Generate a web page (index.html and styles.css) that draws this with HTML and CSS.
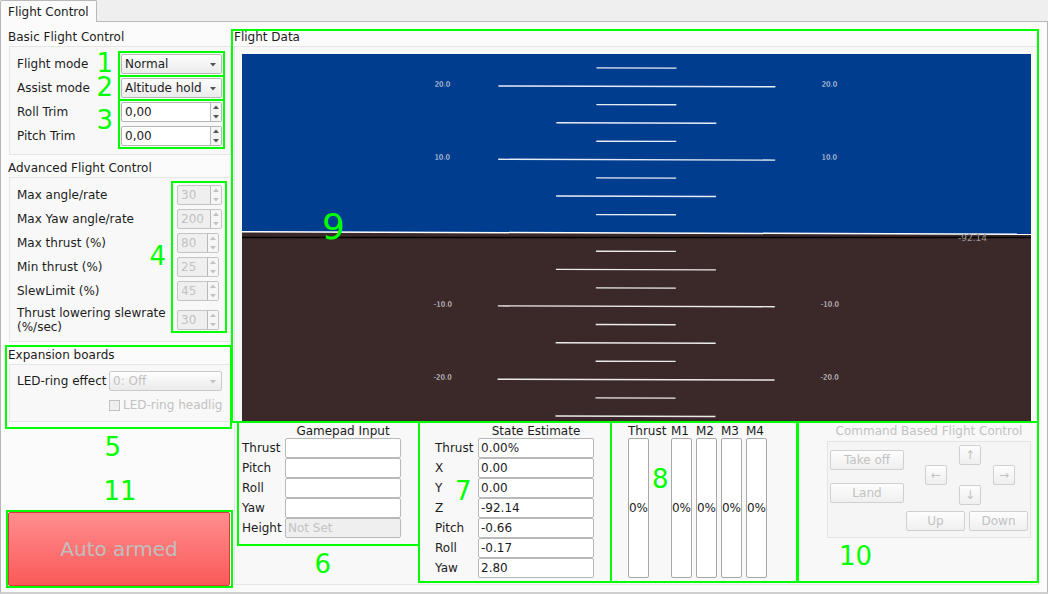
FILE: index.html
```html
<!DOCTYPE html>
<html lang="en">
<head>
<meta charset="utf-8">
<title>Flight Control</title>
<link rel="stylesheet" href="styles.css">
</head>
<body>
<svg class="defs" aria-hidden="true">
  <symbol id="down" viewBox="0 0 8 5"><path d="M1 1h6L4 4.5z"/></symbol>
  <symbol id="up" viewBox="0 0 8 5"><path d="M1 4h6L4 .5z"/></symbol>
</svg>
<nav class="tabs" role="tablist"><button class="tab" role="tab" aria-selected="true">Flight Control</button></nav>
<main class="page">
  <div class="side">
    <section class="group basic">
      <h2 class="title">Basic Flight Control</h2>
      <div class="box">
        <div class="row"><label for="mode">Flight mode</label>
          <div class="slot"><span class="combo"><select id="mode"><option>Normal</option></select><svg class="arrow"><use href="#down"/></svg></span>
            <div class="mark mark-slot"><b class="num num-left">1</b></div></div></div>
        <div class="row"><label for="assist">Assist mode</label>
          <div class="slot"><span class="combo"><select id="assist"><option>Altitude hold</option></select><svg class="arrow"><use href="#down"/></svg></span>
            <div class="mark mark-slot"><b class="num num-left">2</b></div></div></div>
        <div class="pair">
          <div class="labels"><label for="rtrim">Roll Trim</label><label for="ptrim">Pitch Trim</label></div>
          <div class="slots">
            <div class="slot"><span class="spin"><input id="rtrim" type="text" value="0,00"><span class="steps"><button aria-label="Increase roll trim"><svg><use href="#up"/></svg></button><button aria-label="Decrease roll trim"><svg><use href="#down"/></svg></button></span></span></div>
            <div class="slot"><span class="spin"><input id="ptrim" type="text" value="0,00"><span class="steps"><button aria-label="Increase pitch trim"><svg><use href="#up"/></svg></button><button aria-label="Decrease pitch trim"><svg><use href="#down"/></svg></button></span></span></div>
            <div class="mark mark-slot"><b class="num num-left num-high">3</b></div>
          </div>
        </div>
      </div>
    </section>
    <section class="group">
      <h2 class="title">Advanced Flight Control</h2>
      <div class="box advanced">
        <div class="row"><label for="a1">Max angle/rate</label><span class="spin off"><input id="a1" type="text" value="30" disabled><span class="steps"><button disabled aria-label="Increase"><svg><use href="#up"/></svg></button><button disabled aria-label="Decrease"><svg><use href="#down"/></svg></button></span></span></div>
        <div class="row"><label for="a2">Max Yaw angle/rate</label><span class="spin off"><input id="a2" type="text" value="200" disabled><span class="steps"><button disabled aria-label="Increase"><svg><use href="#up"/></svg></button><button disabled aria-label="Decrease"><svg><use href="#down"/></svg></button></span></span></div>
        <div class="row"><label for="a3">Max thrust (%)</label><span class="spin off narrow"><input id="a3" type="text" value="80" disabled><span class="steps"><button disabled aria-label="Increase"><svg><use href="#up"/></svg></button><button disabled aria-label="Decrease"><svg><use href="#down"/></svg></button></span></span></div>
        <div class="row"><label for="a4">Min thrust (%)</label><span class="spin off narrow"><input id="a4" type="text" value="25" disabled><span class="steps"><button disabled aria-label="Increase"><svg><use href="#up"/></svg></button><button disabled aria-label="Decrease"><svg><use href="#down"/></svg></button></span></span></div>
        <div class="row"><label for="a5">SlewLimit (%)</label><span class="spin off narrow"><input id="a5" type="text" value="45" disabled><span class="steps"><button disabled aria-label="Increase"><svg><use href="#up"/></svg></button><button disabled aria-label="Decrease"><svg><use href="#down"/></svg></button></span></span></div>
        <div class="row tall"><label for="a6">Thrust lowering slewrate<br>(%/sec)</label><span class="spin off narrow"><input id="a6" type="text" value="30" disabled><span class="steps"><button disabled aria-label="Increase"><svg><use href="#up"/></svg></button><button disabled aria-label="Decrease"><svg><use href="#down"/></svg></button></span></span></div>
        <div class="mark mark-advanced"><b class="num num-left">4</b></div>
      </div>
    </section>
    <section class="group expansion">
      <h2 class="title">Expansion boards</h2>
      <div class="box">
        <div class="row"><label for="ring">LED-ring effect</label><span class="combo off"><select id="ring" disabled><option>0: Off</option></select><svg class="arrow"><use href="#down"/></svg></span></div>
        <div class="row check"><input id="head" type="checkbox" disabled><label for="head">LED-ring headlig</label></div>
      </div>
      <div class="mark mark-expansion"><b class="num num-below">5</b></div>
    </section>
    <div class="arm">
      <button class="arm-button" disabled>Auto armed</button>
      <div class="mark mark-arm"><b class="num num-above">11</b></div>
    </div>
  </div>

  <section class="group flight">
    <h2 class="title">Flight Data</h2>
    <div class="box data">
      <div class="attitude">
        <svg class="horizon" viewBox="0 0 789 368" preserveAspectRatio="xMidYMid slice" role="img" aria-label="Attitude indicator">
          <g transform="rotate(0.17 394 179)">
            <rect x="-600" y="-600" width="2000" height="779" fill="#003d8f"/>
            <rect x="-600" y="179" width="2000" height="800" fill="#3b2929"/>
            <path d="M-600 179H1400" stroke="#fff" stroke-width="1.5"/>
            <g stroke="#fff" stroke-width="1.4" stroke-opacity=".9">
              <path d="M354 14H434M256 32.4H533M354 50.7H434M314 69H474M354 87.3H434M256 105.7H533M354 124H434M314 142.3H474M354 160.7H434"/>
              <path d="M354 197.3H434M314 215.6H474M354 234H434M256 252.3H533M354 270.6H434M314 289H474M354 307.3H434M256 325.6H533M354 344H434M314 362.3H474"/>
            </g>
            <g class="scale" text-anchor="middle">
              <text x="200" y="33">20.0</text><text x="587" y="32">20.0</text>
              <text x="200" y="106">10.0</text><text x="587" y="105">10.0</text>
              <text x="201" y="253">-10.0</text><text x="588" y="252">-10.0</text>
              <text x="201" y="326">-20.0</text><text x="588" y="325">-20.0</text>
            </g>
          </g>
          <path d="M-600 183.5H1400" stroke="#000" stroke-width="1.5"/>
          <text class="altitude" x="716" y="187">-92.14</text>
        </svg>
        <div class="mark mark-attitude"><b class="num num-big">9</b></div>
      </div>
      <div class="readouts">
        <section class="pane gamepad">
          <h3 class="heading">Gamepad Input</h3>
          <label for="g1">Thrust</label><input id="g1" type="text" readonly>
          <label for="g2">Pitch</label><input id="g2" type="text" readonly>
          <label for="g3">Roll</label><input id="g3" type="text" readonly>
          <label for="g4">Yaw</label><input id="g4" type="text" readonly>
          <label for="g5">Height</label><input id="g5" type="text" value="Not Set" disabled>
          <div class="mark mark-gamepad"><b class="num num-below">6</b></div>
        </section>
        <section class="pane state">
          <h3 class="heading">State Estimate</h3>
          <label for="s1">Thrust</label><input id="s1" type="text" value="0.00%" readonly>
          <label for="s2">X</label><input id="s2" type="text" value="0.00" readonly>
          <label for="s3">Y</label><input id="s3" type="text" value="0.00" readonly>
          <label for="s4">Z</label><input id="s4" type="text" value="-92.14" readonly>
          <label for="s5">Pitch</label><input id="s5" type="text" value="-0.66" readonly>
          <label for="s6">Roll</label><input id="s6" type="text" value="-0.17" readonly>
          <label for="s7">Yaw</label><input id="s7" type="text" value="2.80" readonly>
          <div class="mark mark-pane"><b class="num num-state">7</b></div>
        </section>
        <section class="pane motors">
          <div class="motor"><span id="m0">Thrust</span><div class="bar" role="progressbar" aria-labelledby="m0" aria-valuenow="0">0%</div></div>
          <div class="motor"><span id="m1">M1</span><div class="bar" role="progressbar" aria-labelledby="m1" aria-valuenow="0">0%</div></div>
          <div class="motor"><span id="m2">M2</span><div class="bar" role="progressbar" aria-labelledby="m2" aria-valuenow="0">0%</div></div>
          <div class="motor"><span id="m3">M3</span><div class="bar" role="progressbar" aria-labelledby="m3" aria-valuenow="0">0%</div></div>
          <div class="motor"><span id="m4">M4</span><div class="bar" role="progressbar" aria-labelledby="m4" aria-valuenow="0">0%</div></div>
          <div class="mark mark-pane"><b class="num num-motors">8</b></div>
        </section>
        <section class="pane command">
          <h3 class="heading">Command Based Flight Control</h3>
          <div class="pad">
            <div class="launch"><button class="push" disabled>Take off</button><button class="push" disabled>Land</button></div>
            <div class="steer">
              <div class="cross">
                <button class="push north" disabled>↑</button><button class="push west" disabled>←</button>
                <button class="push east" disabled>→</button><button class="push south" disabled>↓</button>
              </div>
              <div class="lift"><button class="push" disabled>Up</button><button class="push" disabled>Down</button></div>
            </div>
          </div>
          <div class="mark mark-command"><b class="num num-command">10</b></div>
        </section>
      </div>
    </div>
  </section>
</main>
</body>
</html>
```

FILE: styles.css
```css
* { box-sizing: border-box; }
body {
  margin: 0;
  min-height: 100vh;
  display: flex;
  flex-direction: column;
  background: #efefef;
  color: #1c1c1c;
  font: 12px/14px "DejaVu Sans", sans-serif;
}
button, input, select { font: inherit; color: inherit; margin: 0; }
.defs { position: absolute; width: 0; height: 0; }

.tabs { display: flex; height: 21px; }
.tab {
  height: 22px;
  padding: 0 7px;
  border: 1px solid #b8b8b8;
  border-bottom: 0;
  border-radius: 2px 2px 0 0;
  background: #fbfbfb;
  z-index: 1;
}
.page {
  flex: 1;
  display: grid;
  grid-template-columns: 223px minmax(0, 1fr);
  gap: 3px;
  padding: 8px 8px 6px 7px;
  border: 1px solid #b8b8b8;
  border-bottom: 2px solid #cfcfcf;
  background: #fbfbfb;
}

/* grouped settings */
.side { display: flex; flex-direction: column; gap: 6px; min-width: 0; }
.group { position: relative; }
.title { margin: 0; height: 16px; font: inherit; white-space: nowrap; }
.box {
  position: relative;
  padding: 5px 8px;
  border: 1px solid #e6e6e6;
  background: #f8f8f8;
}
.side .box { margin-left: 1px; padding-left: 7px; }
.basic .box { padding-bottom: 6px; }
.row { display: flex; align-items: center; justify-content: space-between; height: 24px; white-space: nowrap; }
.row.tall { height: 33px; }
.pair { display: flex; justify-content: space-between; }
.labels { display: flex; flex-direction: column; }
.labels label { line-height: 24px; }
.slots { position: relative; }
.slot { position: relative; width: 101px; height: 24px; display: flex; align-items: center; }

.combo { position: relative; display: block; width: 101px; height: 20px; }
.combo select {
  appearance: none;
  width: 100%;
  height: 100%;
  padding: 0 0 0 3px;
  border: 1px solid #b9b9b9;
  border-radius: 2px;
  background: linear-gradient(#fdfdfd, #ebebeb);
}
.arrow { position: absolute; right: 5px; top: 8px; width: 8px; height: 5px; fill: #555; pointer-events: none; }
.combo.off { width: 113px; }
.combo.off select { border-color: #cbcbcb; color: #c2c2c2; opacity: 1; }
.off .arrow { fill: #c2c2c2; }

.spin {
  display: flex;
  width: 101px;
  height: 20px;
  border: 1px solid #b4b4b4;
  border-radius: 2px;
  background: #fff;
  overflow: hidden;
}
.spin input { flex: 1; min-width: 0; padding: 0 0 0 3px; border: 0; background: none; }
.steps { display: flex; flex-direction: column; width: 11px; border-left: 1px solid #b9b9b9; background: #f6f6f6; }
.steps button { flex: 1; display: flex; align-items: center; justify-content: center; padding: 0; border: 0; background: none; }
.steps svg { width: 8px; height: 5px; fill: #555; }
.spin.off { flex: none; width: 45px; border-color: #c4c4c4; background: #efefef; color: #c2c2c2; }
.spin.off.narrow { width: 42px; margin-right: 3px; }
.off .steps svg { fill: #c2c2c2; }

.expansion .box { padding-top: 4px; padding-bottom: 4px; }
.check { justify-content: flex-start; gap: 3px; margin-left: 92px; margin-right: -4px; color: #c2c2c2; }
.check input {
  appearance: none;
  flex: none;
  width: 11px;
  height: 11px;
  border: 1px solid #c2c2c2;
  background: #efefef;
}
.arm { position: relative; margin-top: auto; margin-right: 1px; }
.arm-button {
  display: block;
  width: 100%;
  height: 74px;
  border: 1px solid #dc3a3a;
  border-radius: 2px;
  background: linear-gradient(#ff8e8e, #fb5959);
  color: #bfbfbf;
  font-size: 20px;
}

/* flight data */
.flight { display: flex; flex-direction: column; min-width: 0; }
.data { flex: 1; display: flex; flex-direction: column; padding: 7px 7px 6px; margin-bottom: 1px; }
.attitude { position: relative; flex: 1; min-height: 240px; display: flex; }
.horizon { flex: 1; width: 100%; height: auto; min-height: 0; min-width: 0; contain: size; }
.scale { fill: #e4e4ea; font-size: 7px; }
.altitude { fill: #a09a9a; font-size: 9px; }
.readouts { display: grid; grid-template-columns: 177fr 192fr 186fr 234fr; }
.pane { position: relative; min-width: 0; }
.heading { margin: 0; height: 16px; padding-top: 2px; font: inherit; text-align: center; white-space: nowrap; }
.gamepad, .state { display: grid; grid-template-columns: 43px minmax(0, 1fr); grid-auto-rows: 20px; grid-template-rows: 16px; align-content: start; align-items: center; padding-right: 18px; }
.state { padding-left: 16px; padding-right: 17px; }
.gamepad .heading, .state .heading { grid-column: 2; }
.pane > input {
  width: 100%;
  height: 20px;
  padding: 0 2px;
  border: 1px solid #b9b9b9;
  border-radius: 2px;
  background: #fff;
}
.pane > input:disabled { background: #efefef; color: #c2c2c2; }

.motors { display: grid; grid-template-columns: 39px repeat(4, 21px); gap: 4px; padding-left: 17px; }
.motor { display: flex; flex-direction: column; white-space: nowrap; }
.motor span { height: 16px; padding-top: 2px; }
.bar {
  flex: 1;
  width: 21px;
  display: flex;
  align-items: center;
  justify-content: center;
  border: 1px solid #a9a9a9;
  border-radius: 2px;
  background: #fff;
}

.command { padding-left: 30px; color: #c2c2c2; }
.command .heading { height: 19px; }
.pad { display: flex; justify-content: space-between; padding: 3px 2px 6px; border: 1px solid #e4e4e4; background: #f5f5f5; }
.push {
  height: 20px;
  padding: 0;
  border: 1px solid #d0d0d0;
  border-radius: 2px;
  background: linear-gradient(#fdfdfd, #efefef);
  color: #c2c2c2;
}
.launch { display: flex; flex-direction: column; gap: 13px; padding-top: 5px; width: 74px; }
.cross { display: grid; grid-template: repeat(3, 20px) / repeat(3, 34px); justify-content: center; justify-items: center; padding-left: 6px; }
.cross .push { width: 22px; }
.north { grid-area: 1 / 2; }
.west { grid-area: 2 / 1; }
.east { grid-area: 2 / 3; }
.south { grid-area: 3 / 2; }
.lift { display: grid; grid-template-columns: 59px 59px; gap: 4px; padding-top: 6px; }

/* numbered callouts lying over the interface */
.mark { position: absolute; z-index: 2; border: 2px solid #0f0; pointer-events: none; }
.num { position: absolute; color: #0f0; font-weight: normal; font-size: 26px; line-height: 22px; }
.mark-slot { inset: -1px -3px; }
.num-left { right: calc(100% + 7px); top: calc(50% - 12px); }
.num-high { top: 8px; }
.mark-advanced { top: 3px; right: 3px; bottom: 8px; width: 56px; }
.mark-expansion { inset: -3px -1px -7px -3px; }
.num-below { left: calc(50% - 14px); top: calc(100% + 9px); }
.mark-arm { inset: -2px -3px -2px -2px; }
.num-above { left: calc(50% - 16px); bottom: calc(100% + 10px); }
.mark-attitude { inset: -25px -8px -1px -11px; }
.num-big { left: 89px; bottom: 176px; font-size: 36px; line-height: 36px; }
.mark-gamepad { inset: -1px -1px 32px -5px; }
.mark-pane { inset: -1px -1px -5px; }
.num-state { left: 35px; top: 57px; }
.num-motors { left: 40px; top: 45px; }
.mark-command { inset: -1px -8px -5px 0; }
.num-command { left: 40px; bottom: 14px; }
```
